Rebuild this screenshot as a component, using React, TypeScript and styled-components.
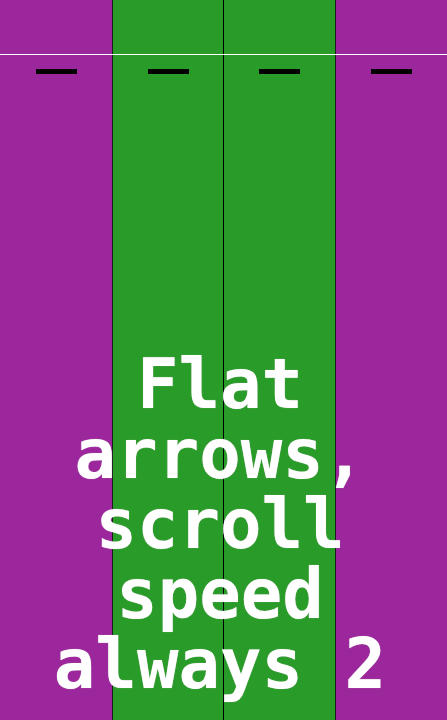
import * as React from 'react';
import styled, { createGlobalStyle } from 'styled-components';

const purple = '#9c269b';
const green = '#299b28';

const GlobalStyle = createGlobalStyle`
  html, body {
    margin: 0;
    padding: 0;
    background: ${purple};
    overflow: hidden;
  }
`;

const Stage = styled.div`
  position: relative;
  width: 447px;
  height: 720px;
  overflow: hidden;
`;

const Lanes = styled.div`
  display: grid;
  grid-template-columns: 112px 111px 112px 112px;
  height: 100%;
`;

const Lane = styled.div<{ $color: string; $edge?: string }>`
  display: flex;
  justify-content: center;
  padding-top: 69px;
  box-sizing: border-box;
  background: ${({ $color }) => $color};
  border-left: ${({ $edge }) => ($edge ? `1px solid ${$edge}` : 'none')};
`;

const Receptor = styled.div`
  width: 41px;
  height: 5px;
  background: #000;
`;

const JudgeLine = styled.div`
  position: absolute;
  left: 0;
  right: 0;
  top: 54px;
  height: 1px;
  background: #fff;
`;

const Caption = styled.div`
  position: absolute;
  left: 0;
  right: 0;
  bottom: 21px;
  padding-right: 7px;
  text-align: center;
  font-family: 'DejaVu Sans Mono', 'Liberation Mono', monospace;
  font-weight: bold;
  font-size: 69px;
  line-height: 70px;
  color: #fff;
  text-shadow: 0 0 1px rgba(200, 200, 200, 0.8);
`;

const lanes = [
  { color: purple },
  { color: green, edge: '#1c1c1c' },
  { color: green, edge: '#000' },
  { color: purple, edge: '#1c1c1c' },
];

export default function App() {
  return (
    <Stage>
      <GlobalStyle />
      <Lanes>
        {lanes.map((l, i) => (
          <Lane key={i} $color={l.color} $edge={l.edge}>
            <Receptor />
          </Lane>
        ))}
      </Lanes>
      <JudgeLine />
      <Caption>
        Flat<br />
        arrows,<br />
        scroll<br />
        speed<br />
        always 2
      </Caption>
    </Stage>
  );
}
